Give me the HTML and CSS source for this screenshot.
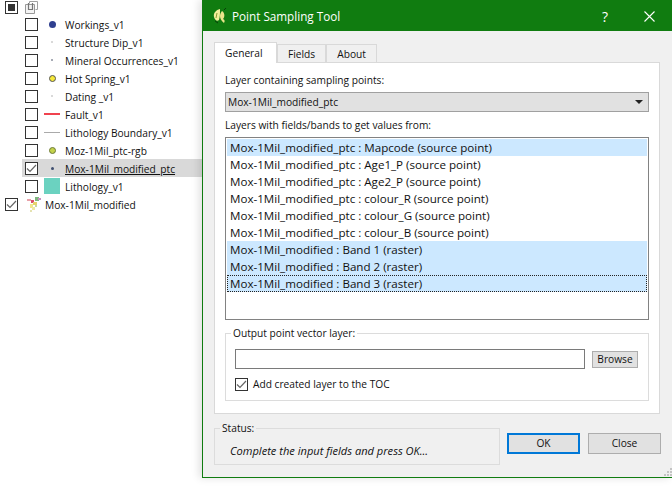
FILE: index.html
```html
<!DOCTYPE html>
<html lang="en">
<head>
    <meta charset="UTF-8">
    <title>Point Sampling Tool</title>
    <link rel="stylesheet" href="styles.css">
</head>
<body>
    <div class="page">
        <div class="tree">
            <div class="tree-row root-row">
                <span class="check partial"></span>
                <svg class="group-icon" width="13" height="13" viewBox="0 0 13 13">
                    <path d="M4.5 2.5V0.5H12.5V8.5H10.5" fill="none" stroke="#a0a0a0"/>
                    <path d="M0.5 3.5H9.5V12.5H0.5Z" fill="#f4f4f4" stroke="#999"/>
                    <path d="M3.5 2V8.5H7.5V2" fill="none" stroke="#777" stroke-width="1.2"/>
                </svg>
            </div>
            <div class="tree-row child"><span class="check"></span><span class="sym"><i class="dot navy"></i></span><span class="name">Workings_v1</span></div>
            <div class="tree-row child"><span class="check"></span><span class="sym"><i class="dot speck pale"></i></span><span class="name">Structure Dip_v1</span></div>
            <div class="tree-row child"><span class="check"></span><span class="sym"><i class="dot speck grey"></i></span><span class="name">Mineral Occurrences_v1</span></div>
            <div class="tree-row child"><span class="check"></span><span class="sym"><i class="dot yellow"></i></span><span class="name">Hot Spring_v1</span></div>
            <div class="tree-row child"><span class="check"></span><span class="sym"><i class="dot speck pale"></i></span><span class="name">Dating _v1</span></div>
            <div class="tree-row child"><span class="check"></span><span class="sym"><i class="line red"></i></span><span class="name">Fault_v1</span></div>
            <div class="tree-row child"><span class="check"></span><span class="sym"><i class="line silver"></i></span><span class="name">Lithology Boundary_v1</span></div>
            <div class="tree-row child"><span class="check"></span><span class="sym"><i class="dot olive"></i></span><span class="name">Moz-1Mil_ptc-rgb</span></div>
            <div class="tree-row child selected">
                <span class="check"><svg width="11" height="11" viewBox="0 0 11 11"><path d="M1 5.5L4 8.5L10 2" fill="none" stroke="#666" stroke-width="1.2"/></svg></span>
                <span class="sym"><i class="dot speck slate"></i></span><span class="name current">Mox-1Mil_modified_ptc</span>
            </div>
            <div class="tree-row child"><span class="check"></span><span class="sym"><i class="fill"></i></span><span class="name">Lithology_v1</span></div>
            <div class="tree-row raster-row">
                <span class="check"><svg width="11" height="11" viewBox="0 0 11 11"><path d="M1 5.5L4 8.5L10 2" fill="none" stroke="#666" stroke-width="1.2"/></svg></span>
                <svg class="raster-icon" width="14" height="15" viewBox="0 0 14 15">
                    <rect x="0" y="2" width="4" height="2" fill="#e8a0a8"/>
                    <rect x="4" y="3" width="3" height="3" fill="#d9506a"/>
                    <rect x="8" y="0" width="4" height="4" fill="#7fb77e"/>
                    <rect x="11" y="1" width="3" height="2" fill="#c88fc0"/>
                    <rect x="6" y="5" width="4" height="3" fill="#e6d36a"/>
                    <rect x="3" y="7" width="3" height="4" fill="#f0e68c"/>
                    <rect x="5" y="10" width="3" height="3" fill="#efe9a0"/>
                    <rect x="3" y="13" width="2" height="2" fill="#e4e2b0"/>
                    <rect x="8" y="8" width="2" height="2" fill="#c9d9a0"/>
                </svg>
                <span class="name">Mox-1Mil_modified</span>
            </div>
        </div>

        <div class="window">
            <div class="titlebar">
                <svg class="app-icon" width="14" height="16" viewBox="0 0 14 16">
                    <path d="M7 1C3 2 0 5 1 9C2 12 4 14 6 12C7 9 7 5 7 1Z" fill="#f2ee9a"/>
                    <path d="M9 3C12 5 12 9 10 11C12 12 12 13 11 15C8 13 7 10 7 8C7 6 8 4 9 3Z" fill="#e9e58a"/>
                    <path d="M4 5L3 10" stroke="#8a9a30" stroke-width="1"/>
                    <path d="M2 13L5 15M11 2L13 0" stroke="#0a3d0a" stroke-width="1"/>
                </svg>
                <span class="title">Point Sampling Tool</span>
                <span class="help">?</span>
                <svg class="close-x" width="11" height="11" viewBox="0 0 11 11"><path d="M0.5 0.5L10.5 10.5M10.5 0.5L0.5 10.5" stroke="#fff" stroke-width="1.1"/></svg>
            </div>

            <div class="content">
                <div class="tabs">
                    <div class="tab active">General</div>
                    <div class="tab">Fields</div>
                    <div class="tab">About</div>
                </div>
                <div class="pane">
                    <div class="label first">Layer containing sampling points:</div>
                    <div class="combo">
                        <span>Mox-1Mil_modified_ptc</span>
                        <i class="arrow"></i>
                    </div>
                    <div class="label second">Layers with fields/bands to get values from:</div>
                    <div class="listbox">
                        <div class="item on">Mox-1Mil_modified_ptc : Mapcode (source point)</div>
                        <div class="item">Mox-1Mil_modified_ptc : Age1_P (source point)</div>
                        <div class="item">Mox-1Mil_modified_ptc : Age2_P (source point)</div>
                        <div class="item">Mox-1Mil_modified_ptc : colour_R (source point)</div>
                        <div class="item">Mox-1Mil_modified_ptc : colour_G (source point)</div>
                        <div class="item">Mox-1Mil_modified_ptc : colour_B (source point)</div>
                        <div class="item on">Mox-1Mil_modified : Band 1 (raster)</div>
                        <div class="item on">Mox-1Mil_modified : Band 2 (raster)</div>
                        <div class="item on focus">Mox-1Mil_modified : Band 3 (raster)</div>
                    </div>
                    <fieldset class="output">
                        <legend>Output point vector layer:</legend>
                        <div class="output-row">
                            <div class="textbox"></div>
                            <div class="browse">Browse</div>
                        </div>
                        <div class="toc-row">
                            <span class="check"><svg width="11" height="11" viewBox="0 0 11 11"><path d="M1 5.5L4 8.5L10 2" fill="none" stroke="#666" stroke-width="1.2"/></svg></span>
                            <span>Add created layer to the TOC</span>
                        </div>
                    </fieldset>
                </div>
                <div class="footer">
                    <fieldset class="status">
                        <legend>Status:</legend>
                        <div class="status-text">Complete the input fields and press OK...</div>
                    </fieldset>
                    <div class="btn default">OK</div>
                    <div class="btn">Close</div>
                </div>
            </div>
            <svg class="grip" width="9" height="9" viewBox="0 0 9 9">
                <path d="M7 1h2v2H7zM4 4h2v2H4zM7 4h2v2H7zM1 7h2v2H1zM4 7h2v2H4zM7 7h2v2H7z" fill="#c4c4c4"/>
            </svg>
        </div>
    </div>
</body>
</html>
```

FILE: styles.css
```css
html, body {
    margin: 0;
    padding: 0;
    background-color: #fff;
}
.page {
    display: flex;
    width: 672px;
    height: 487px;
    overflow: hidden;
    font-family: "Open Sans", "Noto Sans", sans-serif;
    font-size: 10.2px;
    color: #111;
}

/* layer tree */
.tree {
    width: 202px;
    flex: none;
}
.tree-row {
    display: flex;
    align-items: center;
    height: 18px;
    white-space: nowrap;
}
.root-row {
    height: 15px;
    padding-left: 5px;
}
.group-icon {
    margin-left: 7px;
}
.child {
    margin-left: 22px;
    padding-left: 3px;
}
.raster-row {
    padding-left: 5px;
}
.raster-icon {
    margin: 0 4px 0 9px;
}
.name {
    padding-top: 2px;
}
.selected {
    background-color: #d9d9d9;
}
.current {
    text-decoration: underline;
}
.check {
    box-sizing: border-box;
    display: flex;
    align-items: center;
    justify-content: center;
    flex: none;
    width: 13px;
    height: 13px;
    background-color: #fff;
    border: 1px solid #333;
}
.partial::after {
    content: "";
    width: 7px;
    height: 7px;
    background-color: #333;
}
.sym {
    display: flex;
    align-items: center;
    justify-content: center;
    flex: none;
    width: 16px;
    height: 16px;
    margin: 0 5px 0 6px;
}
.dot {
    display: block;
    width: 7px;
    height: 7px;
    border-radius: 50%;
    box-sizing: border-box;
}
.navy { background-color: #2f3f8f; }
.yellow { background-color: #f6e93a; border: 1px solid #555; }
.olive { background-color: #c3d24a; border: 1px solid #6d7a3a; }
.speck { width: 2px; height: 2px; }
.pale { background-color: #ccc; }
.grey { background-color: #8a8f9c; }
.slate { width: 3px; height: 3px; background-color: #3f4f70; }
.line {
    display: block;
    width: 16px;
    height: 1px;
}
.red { height: 2px; background-color: #f0434f; }
.silver { background-color: #aaa; }
.fill {
    display: block;
    width: 16px;
    height: 16px;
    background-color: #6bd2c0;
}

/* dialog */
.window {
    position: relative;
    box-sizing: border-box;
    flex: none;
    width: 470px;
    height: 478px;
    background-color: #f0f0f0;
    border: 1px solid #107c10;
    border-right: none;
    box-shadow: -3px 0 8px rgba(0, 0, 0, 0.12);
}
.titlebar {
    display: flex;
    align-items: center;
    height: 30px;
    background-color: #107c10;
    color: #fff;
    font-size: 11.7px;
    padding-left: 10px;
}
.app-icon {
    margin-right: 5px;
}
.title {
    flex: 1;
}
.help {
    margin-right: 36px;
    font-size: 14px;
}
.close-x {
    margin-right: 17px;
}
.content {
    padding: 11px 0 0 11px;
}
.tabs {
    display: flex;
    align-items: flex-end;
    height: 20px;
}
.tab {
    box-sizing: border-box;
    height: 18px;
    line-height: 18px;
    padding: 0 10px;
    border: 1px solid #d9d9d9;
    border-bottom: none;
    background-color: #f0f0f0;
}
.tab.active {
    height: 21px;
    line-height: 20px;
    width: 63px;
    margin-right: 0;
    background-color: #fff;
    position: relative;
    top: 1px;
}
.pane {
    box-sizing: border-box;
    width: 446px;
    height: 352px;
    padding: 0 10px;
    background-color: #fff;
    border: 1px solid #d9d9d9;
}
.label {
    line-height: 16px;
}
.first {
    margin-top: 9px;
}
.second {
    margin-top: 5px;
}
.combo {
    box-sizing: border-box;
    display: flex;
    align-items: center;
    justify-content: space-between;
    height: 20px;
    margin-top: 4px;
    padding: 0 5px 0 2px;
    background-color: #e1e1e1;
    border: 1px solid #a0a0a0;
}
.arrow {
    width: 0;
    height: 0;
    border-left: 4px solid transparent;
    border-right: 4px solid transparent;
    border-top: 4px solid #222;
}
.listbox {
    box-sizing: border-box;
    height: 183px;
    margin-top: 4px;
    padding: 1px;
    background-color: #fff;
    border: 1px solid #828282;
}
.item {
    box-sizing: border-box;
    height: 17px;
    line-height: 17px;
    padding-left: 3px;
    font-size: 11.6px;
    white-space: nowrap;
}
.item.on {
    background-color: #cce8ff;
}
.item.focus {
    outline: 1px dotted #222;
    outline-offset: -1px;
}
fieldset {
    margin: 0;
    min-width: 0;
    box-sizing: border-box;
    border: 1px solid #dcdcdc;
}
legend {
    line-height: 14px;
    padding: 0 2px;
    margin-left: -4px;
}
.output {
    height: 75px;
    margin-top: 6px;
    padding: 9px 10px 0 9px;
}
.output-row {
    display: flex;
    align-items: center;
    gap: 7px;
}
.textbox {
    box-sizing: border-box;
    width: 350px;
    height: 20px;
    background-color: #fff;
    border: 1px solid #7a7a7a;
}
.browse {
    box-sizing: border-box;
    width: 46px;
    height: 17px;
    line-height: 15px;
    text-align: center;
    background-color: #e1e1e1;
    border: 1px solid #adadad;
}
.toc-row {
    display: flex;
    align-items: center;
    gap: 5px;
    margin-top: 8px;
}
.footer {
    display: flex;
    align-items: flex-start;
    margin-top: 7px;
}
.status {
    width: 286px;
    height: 44px;
    padding: 8px 0 0 15px;
    background-color: #f0f0f0;
}
.status legend {
    margin-left: -10px;
}
.status-text {
    font-size: 11.1px;
    font-style: italic;
    line-height: 16px;
}
.btn {
    box-sizing: border-box;
    width: 73px;
    height: 21px;
    line-height: 19px;
    margin-top: 12px;
    margin-left: 8px;
    text-align: center;
    background-color: #e1e1e1;
    border: 1px solid #adadad;
}
.btn.default {
    margin-left: 7px;
    line-height: 17px;
    border: 2px solid #0078d7;
}
.grip {
    position: absolute;
    right: 0;
    bottom: 1px;
}
```
